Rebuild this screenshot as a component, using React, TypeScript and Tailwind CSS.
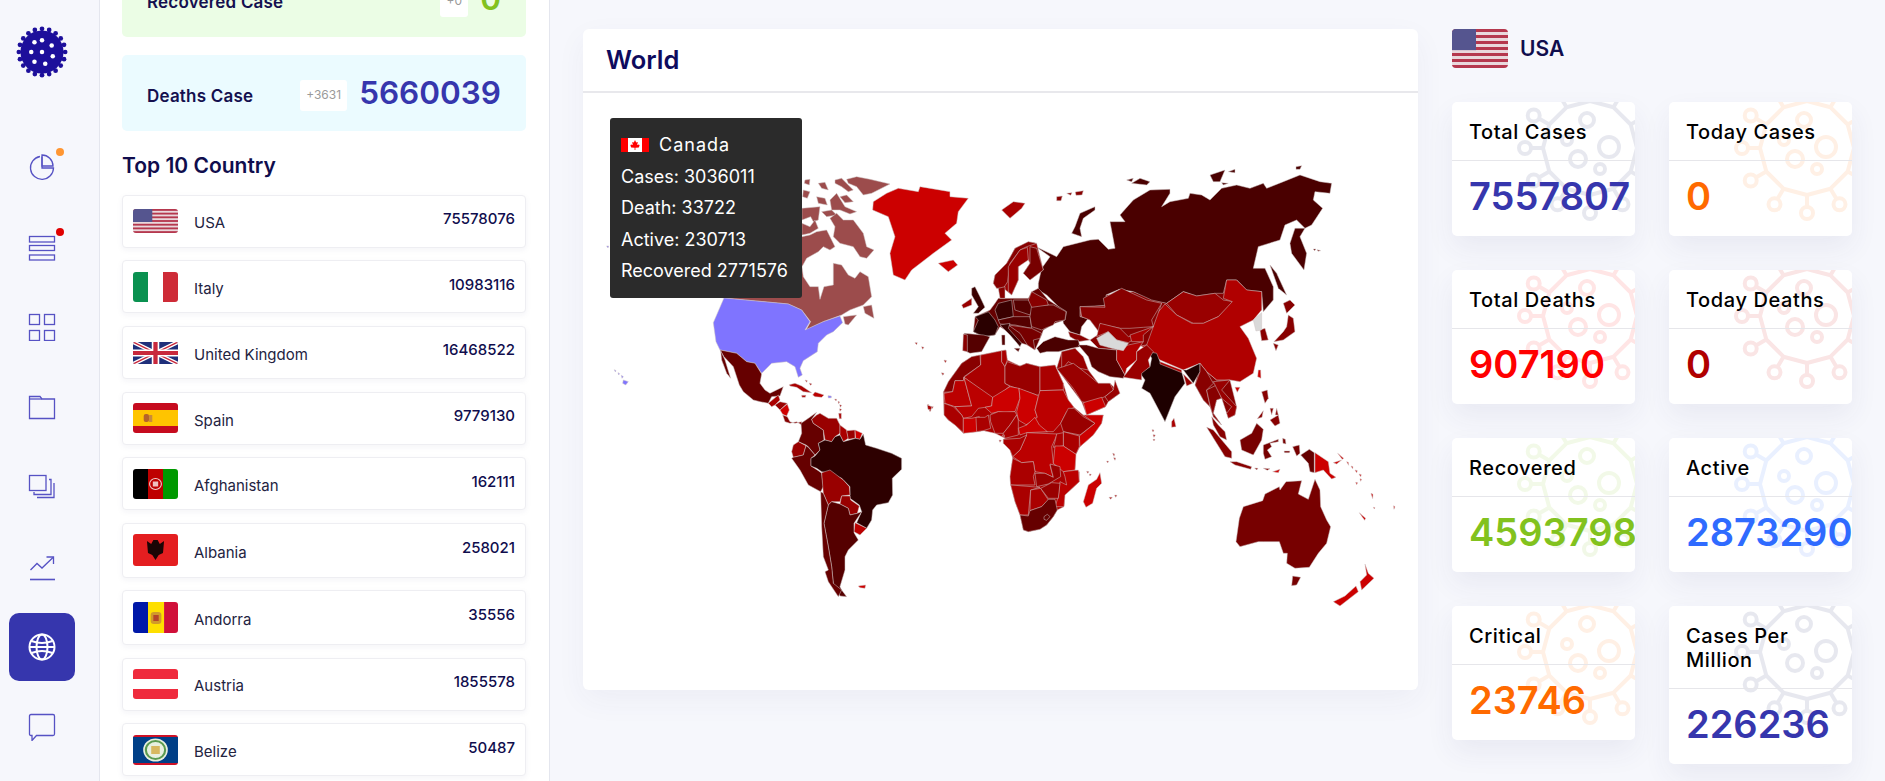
import type { ReactNode } from "react";

type Shape = [string, string];

// map shapes are traced per crop, each group has its own origin (scale 1/3)
const northAmerica: Shape[] = [
  ["#9c4c4c", "696,650 720,645 740,635 770,630 795,680 780,690 760,680 745,695 710,715 696,740 700,770 720,800 745,800 750,838 762,800 790,795 790,730 815,735 835,765 855,775 870,755 895,770 905,830 880,855 840,870 815,885 760,905 708,930 722,905 695,870 655,852 460,834 440,830 440,700"],
  ["#9c4c4c", "830,478 860,470 900,478 960,492 905,520 880,525 860,500 835,490"],
  ["#9c4c4c", "795,480 815,475 835,495 850,510 835,515 815,500 795,490"],
  ["#9c4c4c", "745,490 765,487 775,510 755,505"],
  ["#9c4c4c", "705,480 720,478 718,495 703,490"],
  ["#9c4c4c", "700,510 720,515 712,535 698,530"],
  ["#9c4c4c", "740,530 765,535 772,555 745,550"],
  ["#9c4c4c", "780,540 800,520 825,560 860,575 840,582 810,570 785,570"],
  ["#9c4c4c", "810,530 830,525 850,545 825,548"],
  ["#9c4c4c", "696,565 750,560 745,600 730,605 722,590 696,600"],
  ["#9c4c4c", "755,575 785,570 800,585 770,590"],
  ["#9c4c4c", "780,595 800,580 820,600 850,600 880,640 890,680 912,690 890,715 870,710 850,680 810,670 790,650 795,620"],
  ["#9c4c4c", "696,610 720,620 735,600 745,625 720,640 696,645"],
  ["#9c4c4c", "880,860 905,855 912,895 885,880"],
  ["#9c4c4c", "820,890 860,885 835,915 825,912"],
  ["#7f74ff", "462,834 655,852 695,870 720,905 705,930 760,905 810,888 818,908 790,935 770,945 745,970 742,995 700,1022 690,1045 697,1065 685,1072 675,1040 650,1025 605,1030 575,1060 555,1030 530,1025 500,1000 450,990 438,965 430,908"],
  ["#7f74ff", "160,1080 175,1085 167,1095 158,1090"],
  ["#7f74ff", "133,1049 138,1052 136,1056"],
  ["#7f74ff", "144,1058 149,1061 146,1065"],
  ["#7f74ff", "154,1066 160,1070 156,1075"],
  ["#7f74ff", "110,678 116,678 114,684"],
  ["#660000", "450,990 500,1000 530,1025 555,1030 575,1062 570,1090 585,1110 600,1120 640,1100 630,1128 605,1130 595,1150 570,1145 550,1140 520,1115 508,1095 490,1040 462,1010"],
  ["#660000", "452,992 465,1020 482,1075 470,1060 455,1020"],
  ["#cc0000", "910,545 950,520 985,505 1045,515 1050,500 1140,515 1140,530 1195,535 1165,575 1160,610 1125,640 1145,660 1090,700 1025,750 1005,780 970,765 960,700 975,650 955,590 908,570"],
  ["#cc0000", "1105,730 1150,720 1163,735 1135,755"],
  ["#aa0000", "1035,968 1042,968 1040,974"],
  ["#aa0000", "1055,980 1062,982 1058,988"],
  ["#aa0000", "1122,1020 1130,1022 1126,1028"],
  ["#aa0000", "1115,1060 1122,1062 1118,1066"],
  ["#aa0000", "1072,1155 1086,1160 1082,1172 1074,1168"],
];

const southAmerica: Shape[] = [
  ["#aa0000", "205,70 235,45 240,60 225,75 215,80"],
  ["#990000", "225,75 240,65 262,70 240,90"],
  ["#d00000", "240,90 262,72 268,90 260,108 248,103"],
  ["#880000", "248,105 262,110 270,125 285,130 305,125 305,135 290,125 270,130 255,125"],
  ["#aa0000", "268,14 285,10 305,18 335,38 310,35 290,22 270,18"],
  ["#bb0000", "338,45 345,36 372,45 365,52 345,50"],
  ["#aa0000", "305,46 318,46 316,52 306,52"],
  ["#7f74ff", "384,47 394,48 394,53 385,54"],
  ["#aa0000", "404,57 410,58 408,63"],
  ["#aa0000", "414,64 419,66 416,71"],
  ["#aa0000", "419,74 425,76 421,82"],
  ["#aa0000", "419,86 425,88 420,94"],
  ["#aa0000", "416,100 424,100 424,116 418,116"],
  ["#aa0000", "315,0 322,2 320,7"],
  ["#aa0000", "328,9 336,12 331,16"],
  ["#660000", "350,97 335,118 340,130 370,150 372,180 355,190 360,210 345,225 325,200 318,195 295,185 305,160 303,130 325,115"],
  ["#990000", "350,105 360,100 385,115 410,115 420,135 420,160 405,170 395,185 375,180 370,150 340,130 335,118"],
  ["#aa0000", "420,135 440,150 445,175 430,185 420,165"],
  ["#990000", "440,152 465,150 465,175 445,178"],
  ["#cc0000", "465,150 487,160 480,178 467,175"],
  ["#990000", "295,185 318,197 310,225 280,232 275,215 280,195"],
  ["#660000", "318,197 325,202 345,225 333,235 333,258 355,272 365,280 370,320 362,335 325,315 300,270 275,235 280,232 310,225"],
  ["#2d0000", "360,210 355,190 375,180 395,185 405,170 420,165 430,185 467,175 480,178 490,162 497,195 530,205 575,220 605,235 605,268 577,295 578,345 565,368 530,375 518,390 515,420 500,445 470,428 485,395 478,375 450,355 450,320 425,295 390,280 365,275 350,265 333,258 333,235 345,228"],
  ["#990000", "365,278 390,270 430,300 448,320 450,345 425,348 420,365 395,365 385,375 370,340"],
  ["#990000", "425,348 450,348 452,360 478,378 472,400 450,405 445,385 420,372"],
  ["#bb0000", "465,428 500,445 480,465 462,455"],
  ["#550000", "385,375 395,365 420,372 445,385 450,405 472,400 485,395 462,430 462,458 475,480 445,510 435,530 435,570 420,620 425,630 440,650 420,648 400,610 395,560 385,500 372,430"],
  ["#660000", "362,335 370,340 385,375 372,430 385,500 395,560 400,610 425,630 415,650 385,605 375,575 385,570 370,530 365,440"],
  ["#cc0000", "475,618 497,615 495,625 480,623"],
];

const europe: Shape[] = [
  // land under the countries, so no white shows between them
  ["#880000", "420,260 665,250 640,320 620,375 530,390 475,385 450,360 480,340 450,300 425,290"],
  ["#990000", "365,395 405,385 445,450 475,490 510,490 540,520 505,545 497,560 440,585 425,545 350,445"],
  ["#660000", "100,335 105,290 150,270 165,250 175,235 220,235 265,235 275,215 295,205 300,210 325,240 380,275 375,300 345,310 310,330 305,345 285,390 262,375 245,370 210,340 180,320 165,345 130,350"],
  ["#990000", "160,190 165,165 200,130 225,85 265,65 290,70 310,150 270,180 250,160 270,130 262,115 235,140 235,180 215,225 190,205 170,205"],
  ["#2a0000", "105,290 145,275 165,300 175,320 165,345 130,350 100,335 115,300"],
  ["#3a0000", "95,205 105,200 120,230 135,262 115,280 100,280 115,260 95,225"],
  ["#990000", "65,255 95,235 95,255 70,265"],
  ["#550000", "72,340 130,345 150,350 125,395 90,400 80,395 80,360"],
  ["#880000", "70,342 82,345 82,395 68,392"],
  ["#3a0000", "175,250 215,240 220,290 175,300 165,270"],
  ["#550000", "220,240 272,240 280,265 270,285 225,270"],
  ["#550000", "175,300 220,290 270,290 275,325 225,315 180,312"],
  ["#770000", "205,315 275,325 305,340 300,355 280,360 285,390 262,375 240,340"],
  ["#3a0000", "180,315 210,310 205,325 245,370 240,380 210,345"],
  ["#550000", "222,385 240,385 235,395"],
  ["#550000", "185,345 195,345 195,375 186,375"],
  ["#660000", "275,255 340,255 378,275 375,300 345,305 340,315 315,325 305,330 275,320 270,290"],
  ["#880000", "275,215 320,240 325,255 275,262 265,240"],
  ["#880000", "160,190 165,165 200,130 225,85 265,65 290,70 260,80 240,90 210,130 203,185 190,205 170,205"],
  ["#990000", "205,140 240,90 262,82 265,120 235,140 235,180 215,225 205,215"],
  ["#770000", "270,80 290,85 310,150 270,180 250,160 270,130"],
  ["#880000", "175,205 195,200 195,235 180,235"],
  ["#880000", "385,335 420,345 450,360 415,365 390,350"],
  ["#4a0000", "290,385 310,365 345,350 385,360 415,360 420,380 395,385 355,395 320,395 300,400"],
  ["#990000", "365,395 405,385 430,410 445,450 420,445 385,425 365,450"],
  ["#990000", "355,445 400,430 445,465 475,490 510,490 520,510 495,530 445,550 425,545 400,505 350,445"],
  ["#cc0000", "430,548 485,532 497,560 440,585"],
  ["#990000", "525,480 540,520 505,545 495,530 520,510"],
  ["#550000", "415,375 440,375 475,385 530,390 530,420 555,465 550,475 510,470 475,455 455,440 445,410"],
  ["#b00000", "530,390 565,375 610,365 590,395 590,420 560,445 555,465 530,420"],
  ["#990000", "555,465 590,420 590,395 620,375 640,395 625,420 630,440 605,460 605,480 550,472"],
  ["#880000", "420,260 495,262 490,235 545,205 620,240 665,250 635,300 640,320 610,322 570,325 540,325 480,312 480,340 450,300 425,290"],
  ["#990000", "480,310 540,325 565,350 610,340 565,368 530,360 505,335 470,350"],
  ["#d9d9d9", "470,355 505,335 530,360 565,370 550,392 515,385 480,375"],
  ["#aa0000", "570,345 640,320 610,345 610,365 575,365"],
];

const africa: Shape[] = [
  ["#aa0000", "70,97 85,65 125,10 155,-10 180,-15 245,-28 258,-30 262,0 300,18 320,10 360,20 405,15 430,70 445,120 462,142 490,165 550,165 545,190 520,225 480,260 468,283 465,330 478,335 478,365 435,405 432,440 412,450 400,470 380,495 360,508 325,515 310,510 300,465 285,425 272,375 270,350 278,295 270,270 250,250 250,238 255,235 225,220 190,212 170,215 130,220 105,195 85,180 72,165"],
  ["#880000", "180,-15 182,15 132,50 130,62 105,62 98,95 70,97 85,65 125,10 155,-10"],
  ["#aa0000", "182,-15 245,-28 245,5 255,20 255,70 270,78 225,115 210,110 132,52 182,15"],
  ["#aa0000", "245,-28 258,-30 262,0 255,20 245,5"],
  ["#990000", "255,20 262,5 300,18 320,10 360,20 360,105 350,105 270,78 255,70"],
  ["#aa0000", "360,20 405,15 430,70 430,90 360,92"],
  ["#bb0000", "98,95 105,62 130,62 132,52 155,138 105,140 75,130 72,100"],
  ["#bb0000", "132,52 218,112 215,138 195,142 175,145 155,170 130,175 125,165 105,140 155,138"],
  ["#cc0000", "218,112 270,80 297,85 300,115 285,155 255,158 235,155 215,160 195,142 215,138"],
  ["#cc0000", "297,85 350,105 355,110 345,150 352,172 320,195 295,180 290,155 300,115"],
  ["#bb0000", "360,92 430,90 445,120 462,142 440,155 422,190 400,215 350,215 345,195 318,195 352,172 345,150 355,110"],
  ["#aa0000", "210,165 235,155 285,155 290,165 270,195 250,220 225,220 212,185"],
  ["#aa0000", "72,130 100,140 125,165 130,175 130,218 105,195 85,180 72,165"],
  ["#cc0000", "130,175 155,175 178,170 175,215 130,220"],
  ["#aa0000", "168,172 195,172 205,165 212,205 190,212 170,215"],
  ["#aa0000", "250,220 270,195 290,165 295,180 295,225 255,235"],
  ["#cc0000", "295,205 320,195 345,172 358,195 382,215 320,218 300,225"],
  ["#bb0000", "320,218 412,222 395,260 400,310 420,318 390,315 395,335 400,352 375,340 345,335 340,305 305,308 278,290 300,270 320,225"],
  ["#aa0000", "250,238 300,235 320,225 300,270 278,290 270,270 250,250"],
  ["#990000", "445,145 462,145 490,170 525,190 480,225 430,215 422,190"],
  ["#cc0000", "490,165 550,165 545,190 520,225 480,260 478,228 525,190"],
  ["#aa0000", "430,215 478,228 478,260 468,283 430,258"],
  ["#aa0000", "410,222 430,218 430,258 400,262 405,245"],
  ["#cc0000", "405,258 430,258 468,283 465,330 430,335 400,310"],
  ["#aa0000", "278,295 305,308 340,305 345,335 340,350 345,375 272,375 270,350"],
  ["#990000", "345,340 375,340 400,352 390,312 420,320 422,350 385,372 350,380"],
  ["#bb0000", "430,335 475,330 478,365 435,405 432,440 405,440 415,410 420,365 440,375 435,350"],
  ["#aa0000", "272,375 360,382 332,390 325,465 300,465 285,425"],
  ["#aa0000", "332,390 362,385 385,420 365,440 330,452"],
  ["#990000", "362,385 395,368 420,370 415,415 385,415"],
  ["#660000", "300,465 325,468 330,452 365,440 385,418 405,418 412,450 400,470 380,495 360,508 325,515 310,510"],
  ["#660000", "372,470 382,463 390,470 380,481 372,478"],
  ["#cc0000", "540,338 545,370 530,385 518,430 498,442 490,425 505,375 530,358"],
  ["#aa0000", "22,134 27,134 25,138"],
  ["#aa0000", "33,140 40,140 36,146"],
  ["#aa0000", "27,148 33,150 30,155"],
  ["#aa0000", "65,38 72,40 68,45"],
  ["#aa0000", "246,225 253,226 250,232"],
  ["#aa0000", "237,240 244,241 240,247"],
  ["#aa0000", "500,334 507,335 503,340"],
  ["#aa0000", "508,342 514,343 510,348"],
  ["#aa0000", "578,280 584,282 582,289"],
  ["#aa0000", "581,293 587,294 585,301"],
  ["#aa0000", "560,303 566,304 563,309"],
  ["#aa0000", "567,412 577,412 572,418"],
  ["#aa0000", "584,405 591,406 587,412"],
  ["#aa0000", "696,209 702,210 699,216"],
  ["#aa0000", "699,224 706,225 702,232"],
  ["#aa0000", "699,238 705,238 702,243"],
];

const asia: Shape[] = [
  // land under Russia's south border
  ["#880000", "240,475 320,435 400,425 500,460 680,390 785,425 785,480 655,520 500,560 300,520 240,500"],
  ["#4a0000", "115,400 125,355 150,320 108,290 170,320 190,290 270,270 295,268 325,298 345,295 330,215 375,215 360,195 400,150 450,120 510,118 510,130 485,170 510,155 565,145 570,130 605,135 630,150 665,115 710,105 750,115 790,100 800,115 850,95 900,75 960,95 995,100 990,130 945,125 940,150 968,175 935,225 915,235 890,210 855,225 840,270 775,290 760,355 795,355 820,410 820,450 790,485 785,425 740,420 710,390 680,390 670,430 645,430 590,438 550,425 500,460 455,450 400,425 358,418 318,435 320,465 240,475 240,500 265,505 245,530 240,555 210,545 190,520 185,480 165,460 140,435 115,420"],
  ["#4a0000", "870,280 885,235 915,235 900,260 920,310 912,360 875,310"],
  ["#4a0000", "225,230 240,190 285,170 285,180 250,205 240,235 245,260 215,250"],
  ["#4a0000", "810,345 830,370 860,435 835,415"],
  ["#4a0000", "380,90 400,85 395,95"],
  ["#4a0000", "395,100 420,85 450,95 440,105"],
  ["#4a0000", "630,75 675,60 660,95 640,95"],
  ["#4a0000", "685,65 705,58 705,68"],
  ["#4a0000", "665,98 685,100 670,105"],
  ["#4a0000", "888,50 905,47 900,58 888,58"],
  ["#660000", "940,297 948,297 944,302"],
  ["#660000", "952,299 962,302 954,304"],
  ["#aa0000", "5,180 40,155 75,160 65,175 30,205"],
  ["#880000", "170,140 187,138 183,152 170,152"],
  ["#880000", "200,130 216,128 212,136"],
  ["#880000", "226,126 250,122 246,135 228,136"],
  ["#990000", "500,460 550,425 590,438 645,430 670,450 700,455 655,500 610,520 580,520 530,495"],
  ["#880000", "600,640 620,665 650,690 690,690 710,770 705,795 685,805 665,745 650,750 640,790 665,825 640,800 630,770 610,750 585,705"],
  ["#b00000", "495,462 530,495 575,520 610,520 655,500 697,455 670,445 680,390 710,390 740,420 785,425 785,480 760,510 720,530 745,565 770,625 760,670 720,695 690,690 650,690 620,665 600,640 550,660 480,630 445,600 400,575 435,555 460,530 455,510"],
  ["#1e0000", "445,605 470,610 480,635 545,665 555,700 525,740 495,815 450,730 425,715 435,690 420,670 450,650 455,625"],
  ["#1e0000", "560,660 600,640 600,665 580,700 550,660"],
  ["#aa0000", "480,635 545,660 545,668 480,642"],
  ["#990000", "550,672 578,700 560,708"],
  ["#880000", "600,640 620,665 640,700 620,720 630,770 610,750 585,705 600,665"],
  ["#880000", "620,720 650,705 665,745 650,750 640,790 665,825 640,800 630,765"],
  ["#990000", "640,695 690,690 665,720 710,770 705,795 685,805 680,790 695,770 665,745"],
  ["#aa0000", "515,815 522,805 528,830 515,832"],
  ["#880000", "850,460 870,450 885,465 860,490"],
  ["#880000", "865,495 880,505 885,545 850,570 822,575 850,545 860,530"],
  ["#880000", "820,580 835,585 828,602"],
  ["#880000", "780,540 795,535 805,570 785,572"],
  ["#d9d9d9", "760,510 785,488 785,540 768,543"],
  ["#cc0000", "775,660 782,660 783,685 773,680"],
  ["#cc0000", "705,712 720,712 712,727"],
];

const oceania: Shape[] = [
  ["#880000", "245,155 262,150 265,175 255,190"],
  ["#880000", "270,240 295,225 300,250 285,258"],
  ["#880000", "270,205 280,205 275,225"],
  ["#880000", "290,205 295,225 286,225"],
  ["#880000", "232,236 250,212 246,232"],
  ["#880000", "80,262 100,270 155,335 155,355 135,350"],
  ["#880000", "95,230 115,255 135,275 140,300 120,290 100,255"],
  ["#770000", "180,300 215,280 230,250 250,268 245,300 220,345 185,330"],
  ["#880000", "150,365 170,365 215,380 212,388 165,375"],
  ["#770000", "250,315 295,298 295,305 270,310 275,320 262,330 275,350 255,358 250,340"],
  ["#880000", "224,384 234,385 230,390"],
  ["#880000", "250,385 270,386 262,391"],
  ["#cc0000", "278,395 300,388 295,398"],
  ["#770000", "308,295 316,298 318,312 309,310"],
  ["#770000", "312,333 330,333 328,338 314,338"],
  ["#770000", "338,320 358,315 360,340 350,348"],
  ["#660000", "362,345 388,328 403,338 403,398 390,395 385,370"],
  ["#cc0000", "405,338 445,365 450,400 468,412 455,417 430,390 405,398"],
  ["#cc0000", "460,368 485,360 470,372"],
  ["#cc0000", "473,340 491,355 487,358"],
  ["#cc0000", "500,365 505,367 506,376"],
  ["#cc0000", "513,378 519,380 518,386"],
  ["#cc0000", "525,390 532,392 530,398"],
  ["#cc0000", "537,402 544,404 542,410"],
  ["#cc0000", "540,416 545,418 542,424"],
  ["#cc0000", "527,427 533,428 530,434"],
  ["#770000", "168,605 178,535 190,500 248,482 255,462 298,440 300,450 318,425 365,422 355,462 385,478 405,418 420,450 422,500 440,540 452,560 440,610 415,640 388,682 345,685 320,670 322,640 310,640 298,605 250,605 235,605 180,620"],
  ["#770000", "338,708 362,712 350,735 335,737"],
  ["#cc0000", "555,672 565,700 582,715 545,750 540,725 560,705"],
  ["#cc0000", "528,738 535,755 480,798 460,785 495,768"],
  ["#cc0000", "538,518 557,535 554,541"],
  ["#cc0000", "573,460 579,463 578,476"],
  ["#cc0000", "580,502 585,503 583,507"],
  ["#cc0000", "641,497 645,500 642,508"],
];

function MapGroup({ x, y, shapes }: { x: number; y: number; shapes: Shape[] }) {
  return (
    <g transform={`translate(${x} ${y}) scale(0.3333)`}>
      {shapes.map(([fill, points], i) => (
        <polygon key={i} fill={fill} points={points} stroke="#cfc4c4" strokeWidth={1.5} strokeLinejoin="round" />
      ))}
    </g>
  );
}

function WorldMap() {
  return (
    <svg viewBox="583 93 835 597" className="block w-full h-full">
      <MapGroup x={570} y={20} shapes={northAmerica} />
      <MapGroup x={700} y={380} shapes={southAmerica} />
      <MapGroup x={920} y={360} shapes={africa} />
      <MapGroup x={1000} y={150} shapes={asia} />
      <MapGroup x={940} y={220} shapes={europe} />
      <MapGroup x={1180} y={340} shapes={oceania} />
    </svg>
  );
}

function FlagUS({ className }: { className: string }) {
  const stripes = [0, 2, 4, 6, 8, 10, 12];
  return (
    <svg viewBox="0 0 42 24" preserveAspectRatio="none" className={className}>
      <rect width="42" height="24" fill="#e9d8dc" />
      {stripes.map((s) => (
        <rect key={s} y={(s * 24) / 13} width="42" height={24 / 13} fill="#b5384e" />
      ))}
      <rect width="18" height="13" fill="#55558f" />
    </svg>
  );
}

function FlagIT() {
  return (
    <svg viewBox="0 0 42 30" preserveAspectRatio="none" className="w-[45px] h-[30px] rounded-[3px]">
      <rect width="14" height="30" fill="#0a9150" />
      <rect x="14" width="14" height="30" fill="#fff" />
      <rect x="28" width="14" height="30" fill="#ce2b37" />
    </svg>
  );
}

function FlagUK() {
  return (
    <svg viewBox="0 0 42 22" preserveAspectRatio="none" className="w-[45px] h-[22px] rounded-[2px]">
      <rect width="42" height="22" fill="#1f2f7a" />
      <path d="M0 0L42 22M42 0L0 22" stroke="#fff" strokeWidth="4" />
      <path d="M0 0L42 22M42 0L0 22" stroke="#c8283c" strokeWidth="1.4" />
      <path d="M21 0V22M0 11H42" stroke="#fff" strokeWidth="7" />
      <path d="M21 0V22M0 11H42" stroke="#c8283c" strokeWidth="4" />
    </svg>
  );
}

function FlagES() {
  return (
    <svg viewBox="0 0 42 30" preserveAspectRatio="none" className="w-[45px] h-[30px] rounded-[3px]">
      <rect width="42" height="30" fill="#c60b1e" />
      <rect y="7" width="42" height="16" fill="#ffc400" />
      <rect x="10" y="11" width="5" height="8" rx="2" fill="#b5622a" />
      <rect x="15" y="12" width="3" height="7" fill="#c98a3a" />
    </svg>
  );
}

function FlagAF() {
  return (
    <svg viewBox="0 0 42 30" preserveAspectRatio="none" className="w-[45px] h-[30px] rounded-[3px]">
      <rect width="14" height="30" fill="#000" />
      <rect x="14" width="14" height="30" fill="#be0000" />
      <rect x="28" width="14" height="30" fill="#009900" />
      <circle cx="21" cy="15" r="5.5" fill="none" stroke="#f0d0d0" strokeWidth="1" />
      <rect x="18.5" y="12.5" width="5" height="5" fill="#eec0c0" />
    </svg>
  );
}

function FlagAL() {
  return (
    <svg viewBox="0 0 42 32" preserveAspectRatio="none" className="w-[45px] h-[32px] rounded-[3px]">
      <rect width="42" height="32" fill="#e41e20" />
      <path d="M21 26L18 21L14 19L13 7L17 10L19 6H23L25 10L29 7L28 19L24 21Z" fill="#1a0505" />
    </svg>
  );
}

function FlagAD() {
  return (
    <svg viewBox="0 0 42 31" preserveAspectRatio="none" className="w-[45px] h-[31px] rounded-[3px]">
      <rect width="14" height="31" fill="#0018a8" />
      <rect x="14" width="15" height="31" fill="#fedf00" />
      <rect x="29" width="13" height="31" fill="#d0103a" />
      <rect x="16.5" y="10" width="10" height="12" rx="3" fill="#d09a2a" />
      <rect x="19" y="13" width="5" height="6" fill="#b5452a" />
    </svg>
  );
}

function FlagAT() {
  return (
    <svg viewBox="0 0 42 30" preserveAspectRatio="none" className="w-[45px] h-[30px] rounded-[3px]">
      <rect width="42" height="30" fill="#ef2b3d" />
      <rect y="10" width="42" height="10" fill="#fff" />
    </svg>
  );
}

function FlagBZ() {
  return (
    <svg viewBox="0 0 42 30" preserveAspectRatio="none" className="w-[45px] h-[30px] rounded-[3px]">
      <rect width="42" height="30" fill="#ce1126" />
      <rect y="2" width="42" height="26" fill="#003f87" />
      <circle cx="21" cy="15" r="11.5" fill="#e8f0e0" />
      <circle cx="21" cy="15" r="9" fill="none" stroke="#5a9a50" strokeWidth="2" />
      <rect x="17" y="11" width="8" height="8" fill="#d8b860" />
    </svg>
  );
}

function FlagCA() {
  return (
    <svg viewBox="0 0 28 14" className="w-[28px] h-[14px] shrink-0">
      <rect width="28" height="14" fill="#fff" />
      <rect width="7" height="14" fill="#f00" />
      <rect x="21" width="7" height="14" fill="#f00" />
      <path d="M14 2L15.2 4.6L16.8 4L16.2 7L18 6.4L18.6 7.6L17.8 9.4L14.4 9.8V12H13.6V9.8L10.2 9.4L9.4 7.6L10 6.4L11.8 7L11.2 4L12.8 4.6Z" fill="#f00" />
    </svg>
  );
}

const countries: { name: string; total: string; flag: ReactNode; tall?: boolean }[] = [
  { name: "USA", total: "75578076", flag: <FlagUS className="w-[45px] h-[24px] rounded-[3px]" /> },
  { name: "Italy", total: "10983116", flag: <FlagIT /> },
  { name: "United Kingdom", total: "16468522", flag: <FlagUK /> },
  { name: "Spain", total: "9779130", flag: <FlagES /> },
  { name: "Afghanistan", total: "162111", flag: <FlagAF /> },
  { name: "Albania", total: "258021", flag: <FlagAL />, tall: true },
  { name: "Andorra", total: "35556", flag: <FlagAD />, tall: true },
  { name: "Austria", total: "1855578", flag: <FlagAT /> },
  { name: "Belize", total: "50487", flag: <FlagBZ /> },
];

const stats = [
  { title: "Total Cases", value: "7557807", color: "text-[#3636ad]", tint: "text-[#1c2566]" },
  { title: "Today Cases", value: "0", color: "text-[#ff6a00]", tint: "text-[#ff6a00]" },
  { title: "Total Deaths", value: "907190", color: "text-[#ff0000]", tint: "text-[#ff0000]" },
  { title: "Today Deaths", value: "0", color: "text-[#b00000]", tint: "text-[#c80000]" },
  { title: "Recovered", value: "4593798", color: "text-[#82c21e]", tint: "text-[#82c21e]" },
  { title: "Active", value: "2873290", color: "text-[#2f6bff]", tint: "text-[#2f6bff]" },
  { title: "Critical", value: "23746", color: "text-[#ff6a00]", tint: "text-[#ff6a00]" },
  { title: "Cases Per Million", value: "226236", color: "text-[#3636ad]", tint: "text-[#1c2566]" },
];

const spikes = Array.from({ length: 12 }, (_, i) => i * 30);

function VirusMark({ tint }: { tint: string }) {
  const cx = 138;
  const cy = 46;
  const at = (a: number, r: number) => [cx + r * Math.cos((a * Math.PI) / 180), cy + r * Math.sin((a * Math.PI) / 180)];
  const body = spikes.map((a) => at(a, 47).join(",")).join(" ");
  return (
    <svg className={`absolute left-0 top-0 w-[183px] h-[134px] opacity-10 ${tint}`} viewBox="0 0 183 134" fill="none" stroke="currentColor" strokeWidth="4">
      <polygon points={body} strokeLinejoin="round" />
      {spikes.map((a) => {
        const [x1, y1] = at(a, 47);
        const [x2, y2] = at(a, 59);
        const [bx, by] = at(a, 65);
        return (
          <g key={a}>
            <line x1={x1} y1={y1} x2={x2} y2={y2} />
            <circle cx={bx} cy={by} r="6" />
          </g>
        );
      })}
      <circle cx="157" cy="45" r="10" />
      <circle cx="126" cy="57" r="8" />
      <circle cx="148" cy="67" r="5" />
      <circle cx="135" cy="18" r="7" />
      <circle cx="115" cy="38" r="5" />
    </svg>
  );
}

function Logo() {
  const dots: [number, number][] = [[24, 26], [24, 15], [33, 20], [34, 30], [27, 37], [17, 35], [14, 26], [17, 17]];
  const rays = Array.from({ length: 20 }, (_, i) => (i * Math.PI) / 10);
  return (
    <svg viewBox="0 0 48 52" className="w-[56px] h-[56px]">
      <circle cx="24" cy="26" r="20" fill="#1d0f9b" />
      {rays.map((r) => (
        <circle key={r} cx={24 + 21.5 * Math.cos(r)} cy={26 + 21.5 * Math.sin(r)} r="2.2" fill="#1d0f9b" />
      ))}
      {dots.map(([x, y]) => (
        <circle key={`${x}-${y}`} cx={x} cy={y} r="2.1" fill="#fff" />
      ))}
    </svg>
  );
}

const iconProps = { viewBox: "0 0 28 28", fill: "none", strokeWidth: 1.3, className: "w-[28px] h-[28px] stroke-[#5652c4]" };

const navIcons: { icon: ReactNode; dot?: string }[] = [
  {
    dot: "bg-[#ff9632]",
    icon: (
      <svg {...iconProps}>
        <path d="M12 3.5A11.5 11.5 0 1 0 25.5 15H14V3.5" />
        <path d="M14 2V13H25C25 7 20 2 14 2Z" />
      </svg>
    ),
  },
  {
    dot: "bg-[#e00000]",
    icon: (
      <svg {...iconProps}>
        <rect x="1.5" y="3.5" width="25" height="5.5" />
        <rect x="1.5" y="12.5" width="25" height="5" />
        <rect x="1.5" y="22" width="25" height="5" />
      </svg>
    ),
  },
  {
    icon: (
      <svg {...iconProps}>
        <rect x="1.5" y="1.5" width="10" height="10" />
        <rect x="16.5" y="1.5" width="10" height="10" />
        <rect x="1.5" y="17.5" width="10" height="10" />
        <rect x="16.5" y="17.5" width="10" height="10" />
      </svg>
    ),
  },
  {
    icon: (
      <svg {...iconProps}>
        <path d="M1.5 3.5H12L14 6H26.5V25.5H1.5Z" />
        <path d="M1.5 6H14" />
      </svg>
    ),
  },
  {
    icon: (
      <svg {...iconProps}>
        <rect x="1.5" y="2.5" width="16.5" height="15" />
        <path d="M21 6.5H23V21.5H6V19" />
        <path d="M26 10V24.5H9" />
      </svg>
    ),
  },
  {
    icon: (
      <svg {...iconProps}>
        <path d="M2 26.5H27" strokeWidth="1.6" />
        <path d="M2.5 17L9 10.5L14 15L25 4.5" />
        <path d="M18.5 4H25.5V11" />
      </svg>
    ),
  },
  {
    icon: (
      <svg viewBox="0 0 28 28" fill="none" stroke="#fff" strokeWidth="2" className="w-[28px] h-[28px]">
        <circle cx="14" cy="14" r="12.5" />
        <ellipse cx="14" cy="14" rx="5.5" ry="12.5" />
        <path d="M3.5 8C10 10.5 18 10.5 24.5 8M3.5 20C10 17.5 18 17.5 24.5 20M1.5 14H26.5" />
      </svg>
    ),
  },
  {
    icon: (
      <svg {...iconProps}>
        <path d="M3 1.5H25C26 1.5 26.5 2 26.5 3V21C26.5 22 26 22.5 25 22.5H8.5L4 27.5V22.5H3C2 22.5 1.5 22 1.5 21V3C1.5 2 2 1.5 3 1.5Z" />
      </svg>
    ),
  },
];

function Sidebar() {
  return (
    <aside className="w-[100px] shrink-0 border-r border-[#e4e6ee] flex flex-col items-center pr-[16px] pt-[24px]">
      <Logo />
      <div className="mt-[53px] flex flex-col gap-[12px]">
        {navIcons.map((n, i) => (
          <div
            key={i}
            className={`relative w-[66px] h-[68px] flex items-center justify-center rounded-[10px] ${i === 6 ? "bg-[#3636ad]" : ""}`}
          >
            {n.icon}
            {n.dot && <span className={`absolute left-[47px] top-[15px] w-[8px] h-[8px] rounded-full ${n.dot}`} />}
          </div>
        ))}
      </div>
    </aside>
  );
}

function SummaryCard({ label, badge, value, bg, valueClass, badgeClass }: { label: string; badge: string; value: string; bg: string; valueClass: string; badgeClass: string }) {
  return (
    <div className={`h-[76px] rounded-[5px] pl-[25px] pr-[25px] flex items-center ${bg}`}>
      <span className="text-[17px] leading-none font-semibold tracking-[0.2px] text-[#14104f] mt-[6px]">{label}</span>
      <span className={`ml-auto mt-[4px] bg-white rounded-[3px] h-[31px] flex items-center justify-center text-[12px] text-[#9a9a9a] ${badgeClass}`}>{badge}</span>
      <span className={`ml-[12px] text-[31.5px] leading-none font-semibold ${valueClass}`}>{value}</span>
    </div>
  );
}

function CountryPanel() {
  return (
    <section className="w-[450px] shrink-0 bg-white border-r border-[#e4e6ee] pl-[22px] pr-[23px]">
      <div className="-mt-[39px] flex flex-col gap-[18px]">
        <SummaryCard label="Recovered Case" badge="+0" value="0" bg="bg-[#ebfde5]" valueClass="text-[#82c21e]" badgeClass="w-[28px]" />
        <SummaryCard label="Deaths Case" badge="+3631" value="5660039" bg="bg-[#ebfbff]" valueClass="text-[#3636ad]" badgeClass="w-[47px]" />
      </div>
      <h3 className="mt-[22px] text-[21px] leading-[26px] font-semibold text-[#100d4d]">Top 10 Country</h3>
      <ul className="mt-[15.7px] flex flex-col gap-[12.7px]">
        {countries.map((c) => (
          <li
            key={c.name}
            className={`flex items-center bg-white border border-[#eeeef2] rounded-[4px] shadow-[0_2px_6px_rgba(40,40,90,0.05)] pl-[10px] pr-[10px] ${c.tall ? "h-[54.6px]" : "h-[53px]"}`}
          >
            <span className="w-[45px] flex justify-center">{c.flag}</span>
            <span className="ml-[16px] mt-[5px] text-[15px] text-[#23233f]">{c.name}</span>
            <span className="ml-auto -mt-[4px] text-[15px] font-medium text-[#100d4d]">{c.total}</span>
          </li>
        ))}
      </ul>
    </section>
  );
}

function MapCard() {
  return (
    <div className="relative w-[835px] h-[661px] mt-[29px] bg-white rounded-[6px] shadow-[0_10px_30px_rgba(50,50,110,0.05)] overflow-hidden">
      <div className="h-[64px] border-b-2 border-[#e8e8ec] pl-[23px] pt-[1px] flex items-center">
        <h2 className="text-[25.5px] font-semibold text-[#0e0b5e]">World</h2>
      </div>
      <div className="h-[597px]">
        <WorldMap />
      </div>
      <div className="absolute left-[27px] top-[89px] w-[192px] h-[180px] rounded-[3px] bg-[#2b2b2b] px-[11px] pt-[11px] text-[18px] leading-[31.5px] text-white">
        <div className="flex items-center gap-[10px]">
          <FlagCA />
          <span className="tracking-[1px]">Canada</span>
        </div>
        <div>Cases: 3036011</div>
        <div>Death: 33722</div>
        <div>Active: 230713</div>
        <div>Recovered 2771576</div>
      </div>
    </div>
  );
}

function StatCard({ title, value, color, tint }: (typeof stats)[number]) {
  return (
    <div className="relative w-[183px] bg-white rounded-[5px] overflow-hidden shadow-[0_12px_28px_rgba(50,50,110,0.07)]">
      <VirusMark tint={tint} />
      <div className="relative pl-[17px] pr-[10px] pt-[18px] pb-[16px] border-b border-[#e6e6ea] text-[20px] leading-[24px] font-medium tracking-[0.6px] text-black">{title}</div>
      <div className={`relative pl-[17px] h-[75px] pt-[15px] text-[38px] leading-[40px] font-semibold whitespace-nowrap ${color}`}>{value}</div>
    </div>
  );
}

function CountryStats() {
  return (
    <div className="ml-[34px] w-[400px] pt-[29px]">
      <div className="flex items-center h-[39px]">
        <FlagUS className="w-[56px] h-[39px] rounded-[4px]" />
        <span className="ml-[12px] text-[21px] font-semibold text-[#100d4d]">USA</span>
      </div>
      <div className="mt-[34px] grid grid-cols-[183px_183px] gap-x-[34px] gap-y-[34px] items-start">
        {stats.map((s) => (
          <StatCard key={s.title} {...s} />
        ))}
      </div>
    </div>
  );
}

export default function App() {
  return (
    <div className="h-[781px] overflow-hidden flex bg-[#f6f7fc] font-['Inter',sans-serif]">
      <Sidebar />
      <CountryPanel />
      <main className="pl-[33px] flex items-start">
        <MapCard />
        <CountryStats />
      </main>
    </div>
  );
}
